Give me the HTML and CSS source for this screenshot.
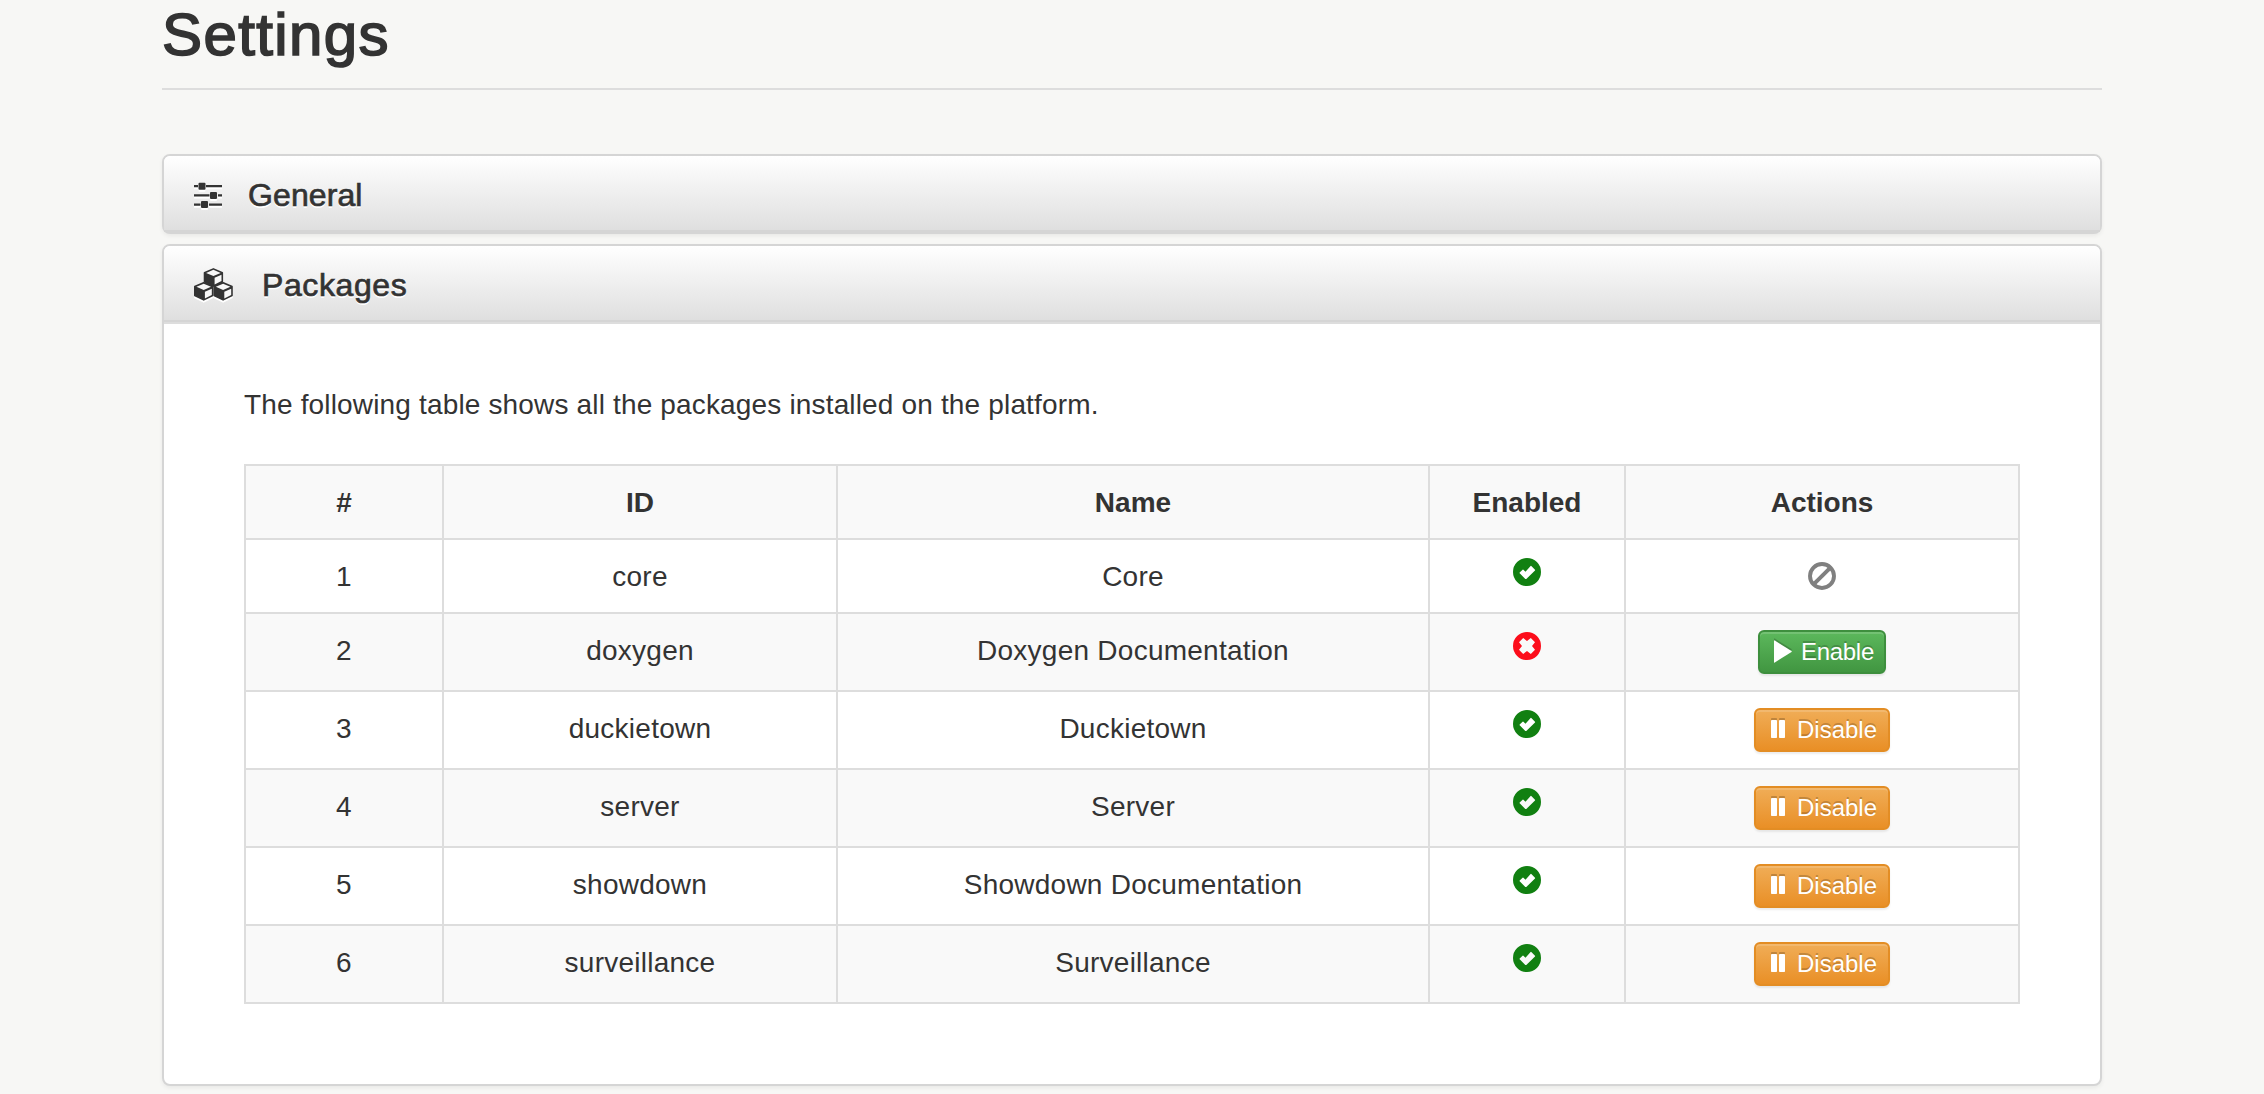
FILE: index.html
```html
<!DOCTYPE html>
<html lang="en">
<head>
<meta charset="utf-8">
<title>Settings</title>
<link rel="stylesheet" href="styles.css">
</head>
<body>
<svg class="sprite" aria-hidden="true">
  <symbol id="ok" viewBox="0 0 28 28"><path fill-rule="evenodd" d="M14 0a14 14 0 1 0 0 28 14 14 0 1 0 0-28zM18.300 8L22 11.700Q22.300 12.100 22 12.500L13.300 20.900Q12.800 21.300 12.300 20.900L6.700 15.300Q6.300 14.900 6.700 14.500L9.600 11.700Q10 11.300 10.400 11.700L12.500 13.700 17.600 8Q18 7.600 18.300 8z"/></symbol>
  <symbol id="no" viewBox="0 0 28 28"><path fill-rule="evenodd" d="M14 0a14 14 0 1 0 0 28 14 14 0 1 0 0-28zM10.200 6L14 9 17.800 6 22 10.200 19 14 22 17.800 17.800 22 14 19 10.200 22 6 17.800 9 14 6 10.200z"/></symbol>
  <symbol id="ban" viewBox="0 0 28 28"><circle cx="14" cy="14" r="12" fill="none" stroke="currentColor" stroke-width="3.900"/><path d="M5.800 22.200L22.200 5.800" stroke="currentColor" stroke-width="4"/></symbol>
  <symbol id="play" viewBox="0 0 18 23"><path d="M0 .8Q0 0 .8 .5L17.500 11Q18 11.500 17.500 12L.8 22.500Q0 23 0 22.200z"/></symbol>
  <symbol id="pause" viewBox="0 0 14 18"><rect width="6" height="18" rx=".8"/><rect x="8" width="6" height="18" rx=".8"/></symbol>
</svg>
<main class="container">
  <h2 class="page-title">Settings</h2>
  <section class="panel">
    <h4 class="panel-heading">
      <svg class="icon-sliders" viewBox="0 0 28 26"><path d="M0 2h4v2.300H0zM12 2h16v2.300H12zM0 11.200h15.500v2.300H0zM24 11.200h4v2.300h-4zM0 20.400h6.500v2.300H0zM15 20.400h13v2.300H15z"/><rect x="4.500" y="-.3" width="7" height="7" rx="1"/><rect x="16" y="8.900" width="7" height="7" rx="1"/><rect x="7" y="18.100" width="7" height="7" rx="1"/></svg>
      <span class="general">General</span>
    </h4>
  </section>
  <section class="panel">
    <h4 class="panel-heading">
      <svg class="icon-cubes" viewBox="0 0 39 33">
        <defs><g id="cube"><path d="M9.700 .9L18.600 4.700V13.700L9.700 18 .8 13.700V4.700z" stroke="currentColor" stroke-width="1.600" stroke-linejoin="round"/><path class="face" d="M9.700 1.800L17 4.900 9.700 8 2.400 4.900zM10.900 9.800L17.800 6.800V13.100L10.900 16.500z"/></g></defs>
        <use href="#cube" x="9.700"/><use href="#cube" y="13.900"/><use href="#cube" x="19.400" y="13.900"/>
      </svg>
      <span class="packages">Packages</span>
    </h4>
    <div class="panel-body">
      <p class="intro">The following table shows all the packages installed on the platform.</p>
      <table class="table">
        <colgroup><col class="c-num"><col class="c-id"><col class="c-name"><col class="c-enabled"><col class="c-actions"></colgroup>
        <tr class="short"><th>#</th><th>ID</th><th>Name</th><th>Enabled</th><th>Actions</th></tr>
        <tr class="short"><td>1</td><td>core</td><td>Core</td><td><svg class="status ok"><use href="#ok"/></svg></td><td><svg class="status ban"><use href="#ban"/></svg></td></tr>
        <tr><td>2</td><td>doxygen</td><td>Doxygen Documentation</td><td><svg class="status no"><use href="#no"/></svg></td><td><a class="btn btn-success"><svg class="play"><use href="#play"/></svg><span>Enable</span></a></td></tr>
        <tr><td>3</td><td>duckietown</td><td>Duckietown</td><td><svg class="status ok"><use href="#ok"/></svg></td><td><a class="btn btn-warning"><svg class="pause"><use href="#pause"/></svg><span>Disable</span></a></td></tr>
        <tr><td>4</td><td>server</td><td>Server</td><td><svg class="status ok"><use href="#ok"/></svg></td><td><a class="btn btn-warning"><svg class="pause"><use href="#pause"/></svg><span>Disable</span></a></td></tr>
        <tr><td>5</td><td>showdown</td><td>Showdown Documentation</td><td><svg class="status ok"><use href="#ok"/></svg></td><td><a class="btn btn-warning"><svg class="pause"><use href="#pause"/></svg><span>Disable</span></a></td></tr>
        <tr><td>6</td><td>surveillance</td><td>Surveillance</td><td><svg class="status ok"><use href="#ok"/></svg></td><td><a class="btn btn-warning"><svg class="pause"><use href="#pause"/></svg><span>Disable</span></a></td></tr>
      </table>
    </div>
  </section>
</main>
</body>
</html>
```
FILE: styles.css
```css
* { box-sizing: border-box; }
html { overflow: hidden; }
body {
  margin: 0;
  height: 1094px;
  overflow: hidden;
  background: #f7f7f5;
  color: #333;
  font: 28px/40px "Liberation Sans", Arial, sans-serif;
}
.sprite { display: none; }
svg { display: block; fill: currentColor; }
.container { width: 1940px; margin: 0 auto; }
.page-title {
  margin: 0 0 64px;
  padding-top: 2px;
  height: 90px;
  border-bottom: 2px solid #ddd;
  font-size: 60px;
  line-height: 66px;
  font-weight: 400;
  letter-spacing: 1.4px;
  -webkit-text-stroke: 1.7px #333;
}
.panel {
  margin-bottom: 10px;
  border: 2px solid #d5d5d5;
  border-radius: 8px;
  background: #fff;
  box-shadow: 0 2px 4px rgba(0, 0, 0, .06);
}
.panel-heading {
  display: flex;
  align-items: flex-start;
  height: 76px;
  margin: 0;
  padding: 0 30px;
  border-bottom: 2px solid #d5d5d5;
  border-radius: 6px 6px 0 0;
  background: linear-gradient(#fff, #dfdfdf);
  font-size: 32px;
  line-height: 36px;
  font-weight: 400;
  -webkit-text-stroke: .7px #333;
  text-shadow: 0 2px 0 #fff;
}
.panel-heading span { margin-top: 21px; }
.panel-heading svg { -webkit-text-stroke: 0; filter: drop-shadow(0 2px 0 #fff); overflow: visible; }
.icon-sliders { width: 28px; height: 26px; margin-top: 27px; }
.icon-cubes { width: 39px; height: 33px; margin-top: 22px; }
.face { fill: #f8f8f8; }
.general { margin-left: 26px; letter-spacing: .1px; }
.packages { margin-left: 29px; letter-spacing: .6px; }
.panel-body { padding: 61px 80px 80px; border-top: 2px solid #ddd; }
.intro { margin: 0 0 39px; letter-spacing: .16px; }
.table {
  width: 1776px;
  table-layout: fixed;
  border-collapse: collapse;
  text-align: center;
}
.c-num { width: 198px; }
.c-id { width: 394px; }
.c-name { width: 592px; }
.c-enabled { width: 196px; }
.c-actions { width: 394px; }
.table tr { height: 78px; }
.table tr.short { height: 74px; }
.table tr:nth-child(odd) { background: #f9f9f9; }
.table tr:nth-child(even) { background: #fff; }
.table th, .table td { padding: 17px 0 0; border: 2px solid #ddd; vertical-align: top; }
.table td { letter-spacing: .25px; }
.status { width: 28px; height: 28px; margin: 1px auto 0; }
.ok { color: #118011; }
.no { color: #fc0d1b; }
.ban { color: #808080; margin-top: 5px; }
.btn {
  display: flex;
  width: 136px;
  height: 44px;
  margin: -1px auto 0;
  border: 2px solid #e38d24;
  border-radius: 6px;
  color: #fff;
  font-size: 24px;
  line-height: 36px;
  letter-spacing: 0;
  text-shadow: 0 -2px 0 rgba(0, 0, 0, .2);
  box-shadow: inset 0 2px 0 rgba(255, 255, 255, .15), 0 2px 2px rgba(0, 0, 0, .075);
}
.btn svg { filter: drop-shadow(0 -2px 0 rgba(0, 0, 0, .2)); overflow: visible; }
.btn span { margin-top: 2px; }
.btn-success { width: 128px; border-color: #3e8f3e; background: linear-gradient(#5cb85c, #419641); letter-spacing: -.3px; }
.btn-warning { background: linear-gradient(#f0ad57, #e98f26); }
.play { width: 18px; height: 23px; margin: 8px 9px 0 14px; }
.pause { width: 14px; height: 18px; margin: 10px 12px 0 15px; }
```
